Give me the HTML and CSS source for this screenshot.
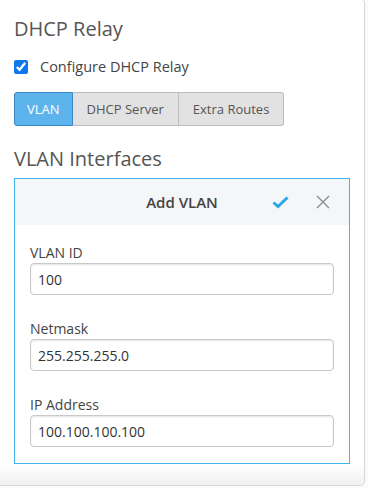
FILE: index.html
```html
<!DOCTYPE html>
<html lang="en">
<head>
    <meta charset="UTF-8">
    <meta name="viewport" content="width=device-width, initial-scale=1.0">
    <title>DHCP Relay</title>
    <link rel="stylesheet" href="styles.css">
</head>
<body>
    <div class="panel">
        <h2 class="section-title">DHCP Relay</h2>
        <label class="check-row">
            <input type="checkbox" checked>
            <span>Configure DHCP Relay</span>
        </label>

        <div class="tabs">
            <button class="tab active">VLAN</button>
            <button class="tab">DHCP Server</button>
            <button class="tab">Extra Routes</button>
        </div>

        <h2 class="section-title sub">VLAN Interfaces</h2>
        <div class="vlan-box">
            <div class="vlan-header">
                <span></span>
                <span class="vlan-title">Add VLAN</span>
                <div class="vlan-actions">
                    <svg class="icon-ok" width="17" height="13" viewBox="0 0 17 13">
                        <polyline points="1.5,6.5 6,10.5 15.5,1.5" fill="none" stroke="#27a8e9" stroke-width="3" stroke-linejoin="miter"/>
                    </svg>
                    <svg class="icon-close" width="14" height="14" viewBox="0 0 14 14">
                        <path d="M1 1 L13 13 M13 1 L1 13" stroke="#8a8a8a" stroke-width="1.3" fill="none"/>
                    </svg>
                </div>
            </div>
            <div class="vlan-form">
                <div class="field">
                    <label>VLAN ID</label>
                    <input type="text" value="100">
                </div>
                <div class="field">
                    <label>Netmask</label>
                    <input type="text" value="255.255.255.0">
                </div>
                <div class="field">
                    <label>IP Address</label>
                    <input type="text" value="100.100.100.100">
                </div>
            </div>
        </div>
        <div class="panel-footer"></div>
    </div>
</body>
</html>
```

FILE: styles.css
```css
body {
    margin: 0;
    background: #fbfbfb;
    font-family: "Open Sans", "Noto Sans", Arial, sans-serif;
    color: #444;
}
.panel {
    width: 350px;
    margin: -2px 0 0 -1px;
    padding: 16px 0 0 14px;
    background: #fff;
    border: 1px solid #d6d6d6;
    border-radius: 0 5px 5px 0;
    box-shadow: 0 1px 2px rgba(0, 0, 0, 0.06);
    overflow: hidden;
}
.section-title {
    margin: 0;
    font-size: 20px;
    line-height: 28px;
    font-weight: 400;
    color: #555;
}
.section-title.sub {
    margin-top: 19px;
    margin-bottom: 5px;
}
.check-row {
    display: flex;
    align-items: center;
    margin-top: 14px;
    font-size: 14.5px;
    line-height: 20px;
    color: #444;
}
.check-row input {
    width: 14px;
    height: 14px;
    margin: 0 12px 0 0;
    accent-color: #1177ee;
}
.tabs {
    display: flex;
    margin-top: 15px;
}
.tab {
    height: 34px;
    padding: 0 14px;
    font-family: inherit;
    font-size: 13px;
    color: #555;
    background-color: #e2e2e2;
    border: 1px solid #bcbcbc;
    border-left: none;
    cursor: pointer;
}
.tab:first-child {
    border-left: 1px solid #bcbcbc;
    border-radius: 3px 0 0 3px;
}
.tab:last-child {
    border-radius: 0 3px 3px 0;
}
.tab.active {
    color: #fff;
    background-color: #5db3ec;
    border: 1px solid #3a86c6;
    padding: 0 12px;
}
.vlan-box {
    width: 334px;
    border: 1px solid #3cb5ec;
}
.vlan-header {
    display: grid;
    grid-template-columns: 1fr auto 1fr;
    align-items: center;
    height: 46px;
    background: #f5f6f8;
}
.vlan-title {
    font-size: 15px;
    font-weight: 600;
    color: #444;
}
.vlan-actions {
    display: flex;
    justify-content: flex-end;
    align-items: center;
    gap: 27px;
    padding-right: 19px;
}
.icon-ok {
    margin-top: 1px;
}
.vlan-form {
    padding: 18px 15px 16px;
}
.field + .field {
    margin-top: 24px;
}
.field label {
    display: block;
    font-size: 14px;
    line-height: 20px;
    color: #444;
}
.field input {
    display: block;
    box-sizing: border-box;
    width: 100%;
    height: 32px;
    margin: 0;
    padding: 0 7px;
    font-family: inherit;
    font-size: 14px;
    color: #333;
    background: #fff;
    border: 1px solid #c9c9c9;
    border-radius: 4px;
    box-shadow: inset 0 1px 2px rgba(0, 0, 0, 0.1);
}
.panel-footer {
    height: 21px;
    margin-left: -14px;
    background: linear-gradient(#ffffff, #f1f1f1);
}
```
